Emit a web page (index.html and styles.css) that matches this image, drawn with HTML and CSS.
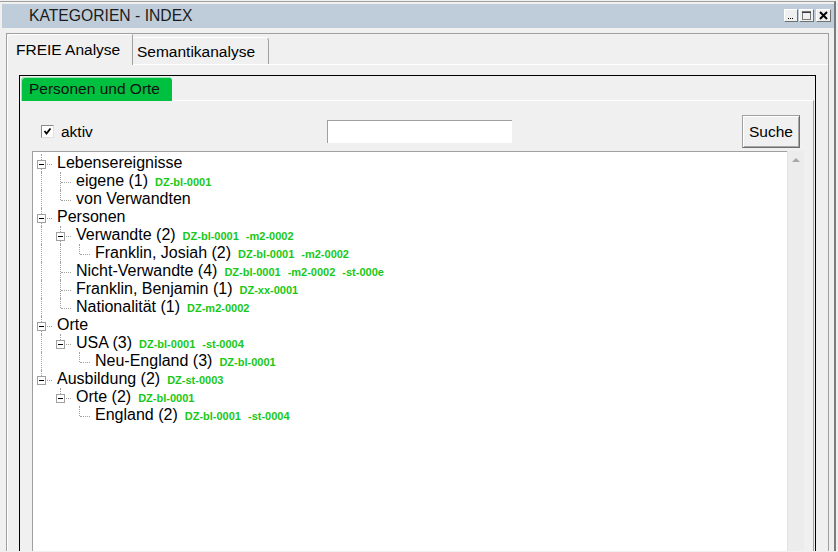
FILE: index.html
```html
<!DOCTYPE html>
<html lang="de">
<head>
    <meta charset="UTF-8">
    <title>Kategorien - Index</title>
    <link rel="stylesheet" href="styles.css">
</head>
<body>
    <div class="window">
        <!-- Titelleiste -->
        <div class="titlebar">
            <span class="title">KATEGORIEN - INDEX</span>
            <div class="win-btns">
                <span class="wbtn">
                    <svg width="10" height="9" viewBox="0 0 10 9"><line x1="2" y1="7.5" x2="8" y2="7.5" stroke="#000" stroke-dasharray="1 1"/></svg>
                </span>
                <span class="wbtn wide">
                    <svg width="11" height="10" viewBox="0 0 11 10"><rect x="1.5" y="1.5" width="8" height="7" fill="none" stroke="#000" stroke-dasharray="1 1"/><line x1="1" y1="1" x2="10" y2="1" stroke="#000"/></svg>
                </span>
                <span class="wbtn wide close">
                    <svg width="11" height="9" viewBox="0 0 11 9"><path d="M2 1 L9 8 M9 1 L2 8" stroke="#000" stroke-width="2"/></svg>
                </span>
            </div>
        </div>

        <!-- Hauptreiter -->
        <div class="tabhost">
            <div class="tabstrip">
                <div class="tab active">FREIE Analyse</div>
                <div class="tab">Semantikanalyse</div>
            </div>
            <div class="tabpage">
                <div class="groupbox">
                    <div class="subtabstrip">
                        <div class="subtab">Personen und Orte</div>
                    </div>
                    <div class="subpage">
                        <div class="toolbar">
                            <div class="field">
                                <span class="checkbox">
                                    <svg width="11" height="11" viewBox="0 0 11 11"><path d="M2.5 5 L4.5 7.5 L8.5 2.5" fill="none" stroke="#000" stroke-width="1.8"/></svg>
                                </span>
                                <label>aktiv</label>
                            </div>
                            <input type="text" class="search-input">
                            <button class="search-btn">Suche</button>
                        </div>

                        <!-- Baumansicht -->
                        <div class="treewrap">
                            <div class="tree">
                                <div class="row"><span class="g tee"><i class="box"></i></span><span class="label">Lebensereignisse</span></div>
                                <div class="row"><span class="g pipe"></span><span class="g tee"></span><span class="label">eigene (1)<b class="code">DZ-bl-0001</b></span></div>
                                <div class="row"><span class="g pipe"></span><span class="g end"></span><span class="label">von Verwandten</span></div>
                                <div class="row"><span class="g tee"><i class="box"></i></span><span class="label">Personen</span></div>
                                <div class="row"><span class="g pipe"></span><span class="g tee"><i class="box"></i></span><span class="label">Verwandte (2)<b class="code">DZ-bl-0001</b><b class="code">-m2-0002</b></span></div>
                                <div class="row"><span class="g pipe"></span><span class="g pipe"></span><span class="g end"></span><span class="label">Franklin, Josiah (2)<b class="code">DZ-bl-0001</b><b class="code">-m2-0002</b></span></div>
                                <div class="row"><span class="g pipe"></span><span class="g tee"></span><span class="label">Nicht-Verwandte (4)<b class="code">DZ-bl-0001</b><b class="code">-m2-0002</b><b class="code">-st-000e</b></span></div>
                                <div class="row"><span class="g pipe"></span><span class="g tee"></span><span class="label">Franklin, Benjamin (1)<b class="code">DZ-xx-0001</b></span></div>
                                <div class="row"><span class="g pipe"></span><span class="g end"></span><span class="label">Nationalität (1)<b class="code">DZ-m2-0002</b></span></div>
                                <div class="row"><span class="g tee"><i class="box"></i></span><span class="label">Orte</span></div>
                                <div class="row"><span class="g pipe"></span><span class="g end"><i class="box"></i></span><span class="label">USA (3)<b class="code">DZ-bl-0001</b><b class="code">-st-0004</b></span></div>
                                <div class="row"><span class="g pipe"></span><span class="g"></span><span class="g end"></span><span class="label">Neu-England (3)<b class="code">DZ-bl-0001</b></span></div>
                                <div class="row"><span class="g end"><i class="box"></i></span><span class="label">Ausbildung (2)<b class="code">DZ-st-0003</b></span></div>
                                <div class="row"><span class="g"></span><span class="g end"><i class="box"></i></span><span class="label">Orte (2)<b class="code">DZ-bl-0001</b></span></div>
                                <div class="row"><span class="g"></span><span class="g"></span><span class="g end"></span><span class="label">England (2)<b class="code">DZ-bl-0001</b><b class="code">-st-0004</b></span></div>
                            </div>
                            <div class="vscroll"><span class="arrow-up"></span></div>
                        </div>
                    </div>
                </div>
            </div>
        </div>
    </div>
</body>
</html>
```

FILE: styles.css
```css
body {
    margin: 0;
    background-color: #f0f0f0;
    font-family: "Liberation Sans", Arial, sans-serif;
    color: #000;
    overflow: hidden;
}
.window {
    width: 834px;
    height: 549px;
    margin-top: 1px;
    border-top: 1px solid #a0a0a0;
    border-right: 2px solid #7c7c7c;
    overflow: hidden;
}
.titlebar {
    display: flex;
    align-items: center;
    width: 832px;
    height: 24px;
    margin: 2px 0 0 2px;
    background-color: #bfccd9;
}
.title {
    padding-left: 27px;
    font-size: 15.7px;
    color: #1b1b1b;
}
.win-btns {
    display: flex;
    align-self: flex-start;
    margin: 5px 3px 0 auto;
}
.wbtn {
    display: flex;
    align-items: center;
    justify-content: center;
    box-sizing: border-box;
    width: 14px;
    height: 13px;
    margin-right: 1px;
    background-color: #f0f0f0;
    border: 1px solid;
    border-color: #fff #707070 #707070 #fff;
}
.wbtn.wide {
    width: 15px;
}
.wbtn.close {
    margin: 0 0 0 1px;
}
.tabhost {
    width: 821px;
    height: 520px;
    margin: 5px 0 0 6px;
    border: 1px solid #a0a0a0;
    border-bottom: none;
}
.tabstrip {
    display: flex;
    align-items: flex-start;
    height: 30px;
}
.tab {
    box-sizing: border-box;
    font-size: 15.5px;
    white-space: nowrap;
}
.tab.active {
    position: relative;
    z-index: 1;
    width: 126px;
    height: 31px;
    padding: 6px 0 0 8px;
    background-color: #f0f0f0;
    border-top: 1px solid #fff;
    border-left: 1px solid #fff;
    border-right: 1px solid #a0a0a0;
    border-top-left-radius: 4px;
}
.tab:not(.active) {
    width: 136px;
    height: 27px;
    margin-top: 3px;
    padding: 5px 0 0 4px;
    border-top: 1px solid #fff;
    border-right: 1px solid #a0a0a0;
    border-top-right-radius: 4px;
}
.tabpage {
    border-top: 1px solid #fff;
    border-left: 1px solid #fff;
    padding: 10px 0 0 11px;
}
.groupbox {
    width: 795px;
    height: 480px;
    border: 1px solid #000;
    border-bottom: none;
}
.subtabstrip {
    display: flex;
    align-items: flex-start;
    height: 24px;
    padding-left: 1px;
}
.subtab {
    position: relative;
    z-index: 1;
    box-sizing: border-box;
    width: 151px;
    height: 24px;
    margin-top: 1px;
    padding: 3px 0 0 8px;
    font-size: 15.5px;
    line-height: 17px;
    color: #111;
    background-color: #00c040;
    border-radius: 4px 4px 0 0;
    box-shadow: inset 1px 1px rgba(255, 255, 255, 0.6);
}
.subpage {
    width: 793px;
    height: 460px;
    border-top: 1px solid #fff;
    border-right: 1px solid #a0a0a0;
}
.toolbar {
    display: flex;
    align-items: center;
    height: 33px;
    margin: 14px 0 3px;
    padding: 0 13px 0 21px;
}
.field {
    display: flex;
    align-items: center;
    width: 286px;
}
.checkbox {
    display: flex;
    align-items: center;
    justify-content: center;
    box-sizing: border-box;
    width: 13px;
    height: 13px;
    background-color: #fff;
    border: 1px solid;
    border-color: #8a8a8a #e0e0e0 #e0e0e0 #8a8a8a;
}
.field label {
    margin-left: 7px;
    font-size: 15.5px;
}
.search-input {
    box-sizing: border-box;
    width: 185px;
    height: 23px;
    margin: 0;
    padding: 0;
    background-color: #fff;
    border: none;
    border-top: 1px solid #a0a0a0;
    border-left: 1px solid #a0a0a0;
}
.search-btn {
    box-sizing: border-box;
    width: 58px;
    height: 33px;
    margin-left: auto;
    padding: 0;
    font-family: "Liberation Sans", Arial, sans-serif;
    font-size: 15.5px;
    color: #000;
    background-color: #f0f0f0;
    border: 1px solid;
    border-color: #a0a0a0 #6d6d6d #6d6d6d #a0a0a0;
    box-shadow: inset 1px 1px #fff, inset -1px -1px #a8a8a8;
}
.treewrap {
    display: flex;
    height: 420px;
    margin-left: 12px;
}
.tree {
    width: 754px;
    padding-top: 2px;
    background-color: #fff;
    border-top: 1px solid #a0a0a0;
    border-left: 1px solid #a0a0a0;
}
.vscroll {
    display: flex;
    justify-content: center;
    box-sizing: border-box;
    width: 17px;
    padding-top: 7px;
    background-color: #ececec;
    border-left: 1px solid #e2e2e2;
}
.arrow-up {
    width: 0;
    height: 0;
    border-left: 4px solid transparent;
    border-right: 4px solid transparent;
    border-bottom: 4px solid #a8a8a8;
}
.row {
    display: flex;
    height: 18px;
}
.g {
    position: relative;
    flex: none;
    width: 19px;
}
.g.pipe::before,
.g.tee::before,
.g.end::before {
    content: '';
    position: absolute;
    left: 8px;
    top: 0;
    bottom: 0;
    border-left: 1px dotted #a0a0a0;
}
.g.end::before {
    bottom: auto;
    height: 10px;
}
.g.tee::after,
.g.end::after {
    content: '';
    position: absolute;
    left: 9px;
    top: 10px;
    width: 10px;
    border-top: 1px dotted #a0a0a0;
}
.box {
    position: absolute;
    z-index: 1;
    left: 4px;
    top: 6px;
    box-sizing: border-box;
    width: 9px;
    height: 9px;
    background-color: #fff;
    border: 1px solid #a0a0a0;
}
.box::after {
    content: '';
    position: absolute;
    left: 1px;
    top: 3px;
    width: 5px;
    height: 1px;
    background-color: #000;
}
.label {
    margin-left: 5px;
    font-size: 16px;
    line-height: 18px;
    white-space: nowrap;
}
.code {
    margin-left: 7px;
    font-size: 11px;
    font-weight: bold;
    color: #18c818;
}
```
